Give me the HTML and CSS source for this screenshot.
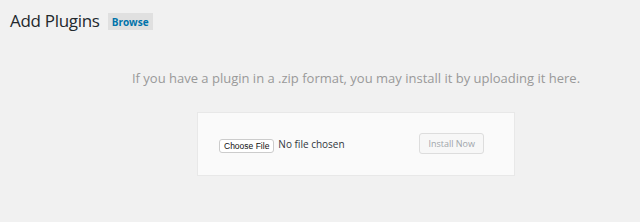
FILE: index.html
```html
<!DOCTYPE html>
<html lang="en">
<head>
  <meta charset="UTF-8">
  <title>Add Plugins</title>
  <link rel="stylesheet" href="styles.css">
</head>
<body>
  <div class="wrap">
    <div class="page-title">
      <h1>Add Plugins</h1>
      <a class="title-action" href="#">Browse</a>
    </div>
    <div class="upload-plugin">
      <p class="install-help">If you have a plugin in a .zip format, you may install it by uploading it here.</p>
      <form class="upload-form">
        <div class="file-field">
          <button type="button" class="choose-file">Choose File</button>
          <span class="file-name">No file chosen</span>
        </div>
        <button type="button" class="install-now" disabled>Install Now</button>
      </form>
    </div>
  </div>
</body>
</html>
```

FILE: styles.css
```css
body {
  margin: 0;
  background: #f1f1f1;
  font-family: "Open Sans", sans-serif;
  color: #23282d;
}
.wrap {
  padding: 8px 0 0 10px;
}
.page-title {
  display: flex;
  align-items: center;
  gap: 8px;
}
h1 {
  margin: 0;
  font-size: 17px;
  letter-spacing: -0.3px;
  font-weight: 400;
  line-height: 26px;
}
.title-action {
  background: #e0e0e0;
  color: #0073aa;
  font-size: 10px;
  font-weight: 700;
  text-decoration: none;
  padding: 2px 4px 1px;
  line-height: 14px;
  margin-top: 1px;
}
.upload-plugin {
  padding-left: 62px;
  display: flex;
  flex-direction: column;
  align-items: center;
}
.install-help {
  margin: 34px 0 0;
  font-size: 13px;
  line-height: 20px;
  color: #999;
}
.upload-form {
  margin-top: 24px;
  height: 62px;
  background: #fafafa;
  border: 1px solid #e8e8e8;
  display: flex;
  align-items: center;
  justify-content: space-between;
  padding: 0 30px 0 21px;
  box-sizing: content-box;
  width: 265px;
}
.file-field {
  display: flex;
  align-items: center;
  gap: 4px;
}
.choose-file {
  font-family: "Liberation Sans", sans-serif;
  font-size: 8.5px;
  padding: 1px 4px;
  background: #fff;
  border: 1px solid #ccc;
  border-radius: 3px;
  color: #111;
  margin-top: 4px;
}
.file-name {
  font-size: 10px;
  color: #32373c;
}
.install-now {
  font-family: "Open Sans", sans-serif;
  font-size: 9px;
  color: #a0a5aa;
  background: #f7f7f7;
  border: 1px solid #ddd;
  border-radius: 3px;
  padding: 4px 8px;
  line-height: 11px;
  margin-top: -2px;
}
```
